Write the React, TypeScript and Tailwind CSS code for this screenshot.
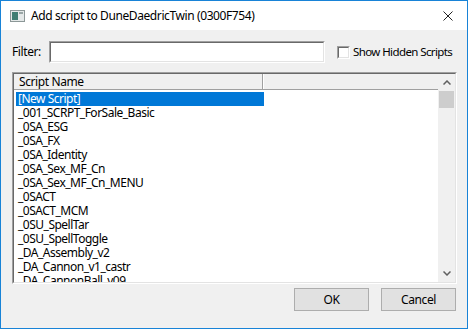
import React from 'react';

const scripts = [
  '[New Script]',
  '_001_SCRPT_ForSale_Basic',
  '_0SA_ESG',
  '_0SA_FX',
  '_0SA_Identity',
  '_0SA_Sex_MF_Cn',
  '_0SA_Sex_MF_Cn_MENU',
  '_0SACT',
  '_0SACT_MCM',
  '_0SU_SpellTar',
  '_0SU_SpellToggle',
  '_DA_Assembly_v2',
  '_DA_Cannon_v1_castr',
  '_DA_CannonBall_v09',
  '_DA_CannonBall_v10',
];

const Sunken = ({ className, children }: { className?: string; children?: React.ReactNode }) => (
  <div className={`border border-t-[#a0a0a0] border-l-[#a0a0a0] border-r-white border-b-white ${className ?? ''}`}>
    <div className="h-full w-full border border-t-[#696969] border-l-[#696969] border-r-[#e3e3e3] border-b-[#e3e3e3] bg-white">
      {children}
    </div>
  </div>
);

const Chevron = ({ up }: { up?: boolean }) => (
  <svg width="8" height="5" viewBox="0 0 8 5">
    <path d={up ? 'M0.5 4.5 L4 1 L7.5 4.5' : 'M0.5 0.5 L4 4 L7.5 0.5'} fill="none" stroke="#606060" strokeWidth="1.5" />
  </svg>
);

const App = () => {
  return (
    <div className="flex h-[329px] w-[468px] flex-col border border-[#1883d7] bg-[#f0f0f0] font-['Noto_Sans',sans-serif] text-[12px] tracking-[-0.4px] text-black">
      <div className="flex h-[29px] items-center bg-white">
        <svg className="ml-[9px]" width="15" height="12" viewBox="0 0 15 12">
          <rect x="0.5" y="0.5" width="14" height="11" fill="#e4e8e8" stroke="#8c9797" />
          <rect x="2" y="2" width="6" height="8" fill="#3f7d72" />
          <rect x="9" y="2" width="4" height="2" fill="#9aa6a6" />
        </svg>
        <span className="ml-[6px] leading-none">Add script to DuneDaedricTwin (0300F754)</span>
        <svg className="ml-auto mr-[14px]" width="10" height="10" viewBox="0 0 10 10">
          <path d="M0.5 0.5 L9.5 9.5 M9.5 0.5 L0.5 9.5" stroke="#222" strokeWidth="1" />
        </svg>
      </div>

      <div className="flex flex-1 flex-col px-[11px]">
        <div className="mt-[11px] flex h-[22px] items-center">
          <span className="w-[37px] shrink-0">Filter:</span>
          <Sunken className="h-[22px] w-[276px] shrink-0" />
          <div className="ml-[12px] flex shrink-0 items-center">
            <Sunken className="h-[13px] w-[13px] shrink-0" />
            <span className="ml-[3px] whitespace-nowrap text-[11.5px] tracking-[-0.6px]">Show Hidden Scripts</span>
          </div>
        </div>

        <Sunken className="mt-[9px] h-[212px] w-[445px]">
          <div className="flex h-full">
            <div className="flex min-w-0 flex-1 flex-col overflow-hidden">
              <div className="flex h-[16px] shrink-0 border-b border-[#a0a0a0] bg-[#f0f0f0]">
                <div className="flex w-[249px] items-center border-r border-[#a0a0a0] pl-[5px] leading-none">Script Name</div>
                <div className="flex-1 border-l border-white" />
              </div>
              <div className="flex flex-col pt-[2px] tracking-[-0.5px]">
                {scripts.map((s, i) => (
                  <div key={s} className="flex h-[14px] items-center">
                    <div
                      className={`ml-[2px] w-[248px] whitespace-nowrap pl-[2px] leading-[14px] ${
                        i === 0 ? 'bg-[#0078d7] text-white' : ''
                      }`}
                    >
                      {s}
                    </div>
                  </div>
                ))}
              </div>
            </div>
            <div className="flex w-[17px] shrink-0 flex-col bg-[#f0f0f0]">
              <div className="flex h-[17px] items-center justify-center">
                <Chevron up />
              </div>
              <div className="mx-[1px] h-[17px] bg-[#cdcdcd]" />
              <div className="flex-1" />
              <div className="flex h-[17px] items-center justify-center">
                <Chevron />
              </div>
            </div>
          </div>
        </Sunken>

        <div className="mt-[4px] flex justify-end gap-[12px]">
          <button className="h-[23px] w-[75px] border border-[#adadad] bg-[#e1e1e1] leading-none">OK</button>
          <button className="h-[23px] w-[75px] border border-[#adadad] bg-[#e1e1e1] leading-none">Cancel</button>
        </div>
      </div>
    </div>
  );
};

export default App;
